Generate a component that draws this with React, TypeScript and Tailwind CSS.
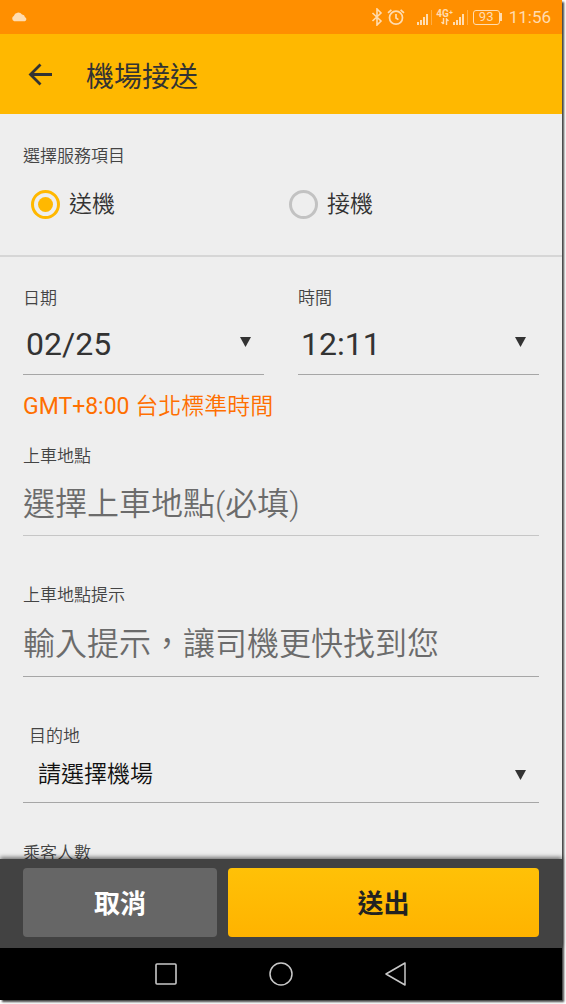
import { useState } from "react"
import type { ReactNode } from "react"

const services = [
  { value: "dropoff", label: "送機" },
  { value: "pickup", label: "接機" },
]

const labelClass = "block text-[17px] leading-6 font-[350] text-[#444444]"
const inputClass =
  "block w-full border-b bg-transparent pt-1 text-[32px] font-[350] text-[#333333] placeholder:text-[#6b6b6b] outline-none"

function SignalIcon() {
  return (
    <svg className="h-4 w-4" viewBox="0 0 16 16" fill="currentColor" aria-hidden="true">
      <rect x="0" y="13" width="2" height="3" />
      <rect x="3" y="11" width="2" height="5" />
      <rect x="6" y="8" width="2" height="8" />
      <rect x="9" y="5" width="2" height="11" />
      <rect x="14" y="1" width="1" height="15" opacity="0.4" />
    </svg>
  )
}

function StatusBar() {
  return (
    <div className="flex h-[34px] shrink-0 items-center bg-[#ff8f00] pr-[11px] pl-[11px] text-[#ffdcb0]">
      <svg className="h-[10px] w-[17px]" viewBox="0 0 17 10" fill="currentColor" aria-hidden="true">
        <path d="M3.2 9.2A2.8 2.8 0 0 1 2.8 4 4.6 4.6 0 0 1 11 2.6 3 3 0 0 1 14 5.2a2.1 2.1 0 0 1-.2 4z" />
      </svg>
      <div className="ml-auto flex items-center">
        <svg className="h-[18px] w-3" viewBox="0 0 12 18" fill="none" stroke="currentColor" strokeWidth="1.6" aria-hidden="true">
          <path d="M1.5 5 10 13l-4 4V1l4 4-8.5 8" />
        </svg>
        <svg className="ml-1 h-[18px] w-[18px]" viewBox="0 0 18 18" fill="none" stroke="currentColor" strokeWidth="1.7" aria-hidden="true">
          <circle cx="9" cy="9.7" r="6.5" />
          <path d="M9 6v4l2.4 1.6M1 4.8l3.4-3M17 4.800l-3.4-3" />
        </svg>
        <div className="ml-3">
          <SignalIcon />
        </div>
        <div className="ml-1 flex w-4 flex-col items-center">
          <span className="text-[10px] leading-[9px] font-bold">4G⁺</span>
          <svg className="h-[7px] w-2" viewBox="0 0 8 7" fill="none" stroke="currentColor" strokeWidth="1.4" aria-hidden="true">
            <path d="M2.5 0v6M.5 4l2 2M5.5 7V1l2 2" />
          </svg>
        </div>
        <SignalIcon />
        <div className="ml-1 flex items-center">
          <span className="flex h-[15px] w-[27px] items-center justify-center rounded-[3px] border border-current text-[13px] leading-3">
            93
          </span>
          <span className="h-2 w-[2px] bg-current" />
        </div>
        <span className="ml-[7px] text-[17px] leading-5">11:56</span>
      </div>
    </div>
  )
}

function Dropdown({ id, className, children }: { id: string; className: string; children: ReactNode }) {
  return (
    <div className="flex items-center border-b border-[#a6a6a6]">
      <select id={id} className={`min-w-0 flex-1 appearance-none bg-transparent outline-none ${className}`}>
        {children}
      </select>
      <svg className="mr-[13px] h-[10px] w-[11px]" viewBox="0 0 11 10" fill="#333333" aria-hidden="true">
        <path d="M0 0h11L5.5 10z" />
      </svg>
    </div>
  )
}

export default function App() {
  const [service, setService] = useState("dropoff")

  return (
    <div className="h-screen overflow-hidden bg-white pr-1 pb-1 font-[Roboto,'Noto_Sans_CJK_TC',sans-serif]">
      <div className="flex h-full flex-col bg-[#eeeeee] shadow-[2px_2px_2px_rgba(0,0,0,0.75)]">
        <StatusBar />

        <header className="flex h-20 shrink-0 items-center bg-[#ffb800] pl-7 text-[#333333]">
          <button type="button" aria-label="返回" className="pt-[2px]">
            <svg className="h-6 w-6" viewBox="0 0 24 24" fill="none" stroke="currentColor" strokeWidth="2.8" aria-hidden="true">
              <path d="M12.5 1.5 2.5 11.5l10 10M2.5 11.5H24" />
            </svg>
          </button>
          <h1 className="ml-[34px] pt-2 text-[28px] leading-10">機場接送</h1>
        </header>

        <main className="min-h-0 flex-1 overflow-hidden">
          {/* Service type */}
          <fieldset className="border-b-2 border-[#d6d6d6] px-[23px] pt-[30px] pb-[34px]">
            <legend className={`float-left w-full ${labelClass}`}>選擇服務項目</legend>
            <div className="clear-both grid grid-cols-2 pt-[19px]">
              {services.map((item) => (
                <label key={item.value} className="flex items-center gap-[9px] pl-2 text-[23px] leading-8 font-[350] text-[#333333]">
                  <input
                    type="radio"
                    name="service"
                    value={item.value}
                    checked={service === item.value}
                    onChange={() => setService(item.value)}
                    className="grid h-[29px] w-[29px] appearance-none place-items-center rounded-full border-3 border-[#c2c2c2] before:h-[15px] before:w-[15px] before:rounded-full checked:border-[#ffb800] checked:before:bg-[#ffb800]"
                  />
                  <span className="pt-[2px]">{item.label}</span>
                </label>
              ))}
            </div>
          </fieldset>

          {/* Trip details */}
          <div className="px-[23px] pt-[29px]">
            <div className="grid grid-cols-2 gap-[34px]">
              <div>
                <label htmlFor="date" className={labelClass}>日期</label>
                <Dropdown id="date" className="h-16 pt-1 pl-[3px] text-[32px] text-[#333333]">
                  <option>02/25</option>
                </Dropdown>
              </div>
              <div>
                <label htmlFor="time" className={labelClass}>時間</label>
                <Dropdown id="time" className="h-16 pt-1 pl-[3px] text-[32px] text-[#333333]">
                  <option>12:11</option>
                </Dropdown>
              </div>
            </div>
            <p className="mt-4 text-[23px] leading-8 font-[350] text-[#ff6f00]">
              <span className="font-normal">GMT+8:00</span> 台北標準時間
            </p>

            <label htmlFor="place" className={`mt-[21px] ${labelClass}`}>上車地點</label>
            <input id="place" className={`h-[68px] border-[#c6c6c6] ${inputClass}`} placeholder="選擇上車地點(必填)" />

            <label htmlFor="hint" className={`mt-[47px] ${labelClass}`}>上車地點提示</label>
            <input id="hint" className={`h-[70px] border-[#a6a6a6] ${inputClass}`} placeholder="輸入提示，讓司機更快找到您" />

            <label htmlFor="airport" className={`mt-[47px] pl-[6px] ${labelClass}`}>目的地</label>
            <Dropdown id="airport" className="h-[54px] pl-[15px] text-[23px] font-[350] text-[#111111]">
              <option>請選擇機場</option>
            </Dropdown>

            <p className={`mt-[38px] ${labelClass}`}>乘客人數</p>
          </div>
        </main>

        <footer className="relative flex shrink-0 gap-[11px] bg-[#424242] px-[23px] pt-[9px] pb-[11px] text-[26px] font-bold shadow-[0_-2px_4px_rgba(0,0,0,0.5)]">
          <button type="button" className="h-[69px] flex-5 rounded-[4px] bg-[#666666] pt-1 text-white">
            取消
          </button>
          <button type="button" className="h-[69px] flex-8 rounded-[4px] bg-linear-to-b from-[#ffc107] to-[#ffb300] pt-1 text-[#222222]">
            送出
          </button>
        </footer>

        <nav className="relative flex h-[52px] shrink-0 items-center justify-center bg-black text-[#c8c8c8]">
          <button type="button" aria-label="最近使用" className="flex w-[115px] justify-center">
            <svg className="h-6 w-6" viewBox="0 0 24 24" fill="none" stroke="currentColor" strokeWidth="1.6" aria-hidden="true">
              <rect x="2" y="2" width="20" height="20" rx="1" />
            </svg>
          </button>
          <button type="button" aria-label="主畫面" className="flex w-[115px] justify-center">
            <svg className="h-6 w-6" viewBox="0 0 24 24" fill="none" stroke="currentColor" strokeWidth="1.5" aria-hidden="true">
              <circle cx="12" cy="12" r="11" />
            </svg>
          </button>
          <button type="button" aria-label="返回上一頁" className="flex w-[115px] justify-center">
            <svg className="h-6 w-6" viewBox="0 0 24 24" fill="none" stroke="currentColor" strokeWidth="1.5" strokeLinejoin="round" aria-hidden="true">
              <path d="M21 1v22L2 12z" />
            </svg>
          </button>
        </nav>
      </div>
    </div>
  )
}
